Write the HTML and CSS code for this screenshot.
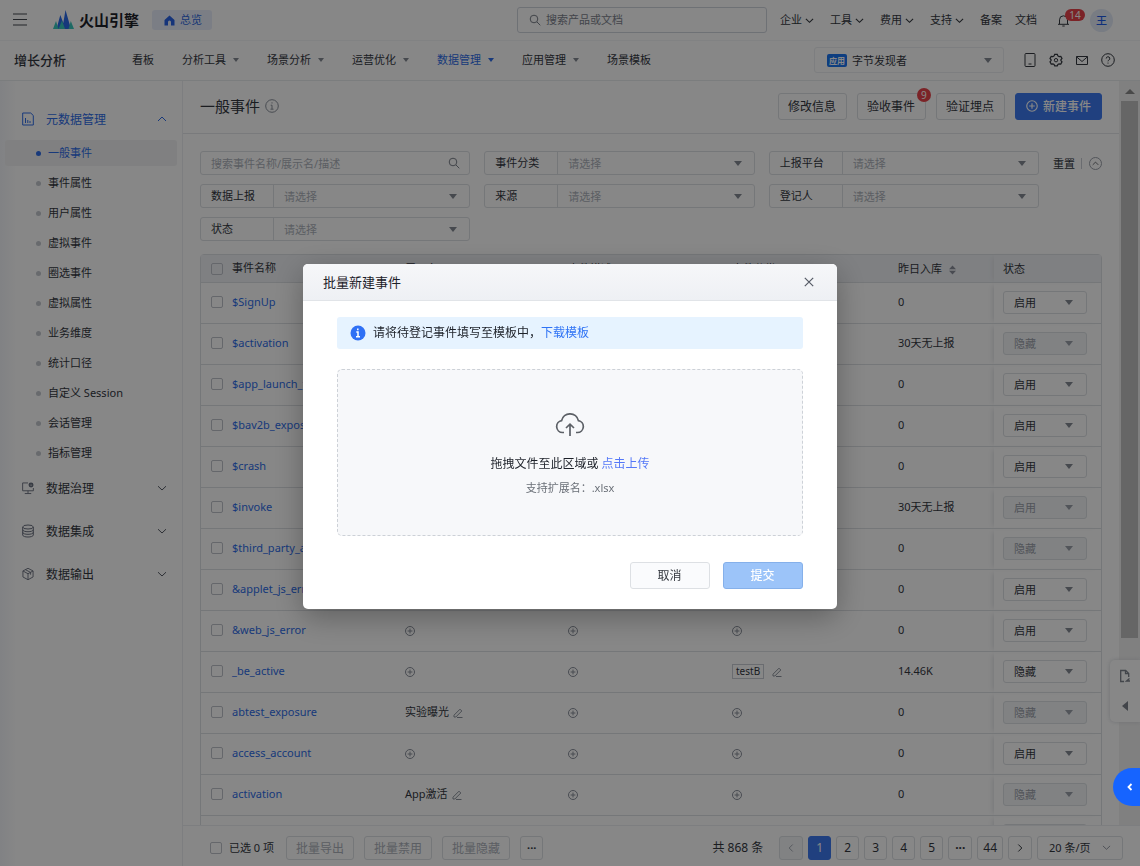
FILE: index.html
```html
<!DOCTYPE html>
<html lang="zh-CN">
<head>
<meta charset="utf-8">
<title>一般事件 - 增长分析</title>
<link rel="stylesheet" href="styles.css">
</head>
<body>
<svg class="sprite" aria-hidden="true">
  <symbol id="plus" viewBox="0 0 12 12"><circle cx="6" cy="6" r="4.5"/><path d="M6 3.6v4.8M3.6 6h4.8"/></symbol>
  <symbol id="pen" viewBox="0 0 12 12"><path d="M2 8.2 8 2.2l1.8 1.8-6 6H2zM5 10.500h5.500"/></symbol>
  <symbol id="down" viewBox="0 0 10 10"><path d="M1 3.200 5 7l4-3.800"/></symbol>
  <symbol id="up" viewBox="0 0 10 10"><path d="M1 7l4-4 4 4"/></symbol>
  <symbol id="search" viewBox="0 0 12 12"><circle cx="5" cy="5" r="3.800"/><path d="M8 8l3.300 3.300"/></symbol>
</svg>
<div class="app">
  <header class="topbar">
    <button class="plain menu-btn" aria-label="菜单"><svg width="14" height="14" viewBox="0 0 14 14"><path d="M0 1h14M0 6.500h14M0 12h14"/></svg></button>
    <svg class="logo" width="21" height="20" viewBox="0 0 21 20"><path fill="#2a6be8" d="M3.500 19 7.300 5l3 8 2.200-13L18 19z"/><path fill="#38c8bd" d="M0 19 3 11l2.500 8zM5.500 19 9 10.500l3 8.500zM15.500 19l2.300-8L21 19z"/></svg>
    <span class="brand">火山引擎</span>
    <a class="overview" href="#"><svg width="11" height="11" viewBox="0 0 11 11"><path d="M5.500.500 10.500 5v5.500H7V7a1.500 1.500 0 0 0-3 0v3.500H.500V5z"/></svg>总览</a>
    <label class="top-search"><svg class="ico" width="12" height="12"><use href="#search"/></svg><input type="text" placeholder="搜索产品或文档" aria-label="搜索产品或文档"></label>
    <nav class="top-nav">
      <a href="#">企业<svg class="ico" width="9" height="9"><use href="#down"/></svg></a>
      <a href="#">工具<svg class="ico" width="9" height="9"><use href="#down"/></svg></a>
      <a href="#">费用<svg class="ico" width="9" height="9"><use href="#down"/></svg></a>
      <a href="#">支持<svg class="ico" width="9" height="9"><use href="#down"/></svg></a>
      <a href="#">备案</a>
      <a href="#" class="close-item">文档</a>
    </nav>
    <button class="plain bell" aria-label="通知"><svg class="ico" width="13" height="13" viewBox="0 0 13 13"><path d="M1 10.300h11M2.500 10V5.800a4 4 0 0 1 8 0V10M5.300 12h2.400"/></svg><span class="count pill">14</span></button>
    <span class="avatar">王</span>
  </header>
  <header class="subbar">
    <strong class="product">增长分析</strong>
    <nav class="sub-nav">
      <a href="#">看板</a>
      <a href="#">分析工具<i class="tri"></i></a>
      <a href="#">场景分析<i class="tri"></i></a>
      <a href="#">运营优化<i class="tri"></i></a>
      <a href="#" class="on">数据管理<i class="tri"></i></a>
      <a href="#">应用管理<i class="tri"></i></a>
      <a href="#">场景模板</a>
    </nav>
    <button class="app-picker"><span class="tag">应用</span>字节发现者<i class="tri"></i></button>
    <div class="tools">
      <button class="plain" aria-label="手机"><svg class="ico" width="14" height="14" viewBox="0 0 14 14"><rect x="2" y=".500" width="10" height="13" rx="1"/><path d="M5.500 11h3"/></svg></button>
      <button class="plain" aria-label="设置"><svg class="ico" width="14" height="14" viewBox="0 0 14 14"><path stroke-width="1.200" d="M5.700 1.300h2.600l.6 1.600 1.200.7 1.700-.3 1.200 2.200-1.100 1.300v.8l1.100 1.300-1.200 2.200-1.700-.3-1.200.7-.6 1.400H5.700l-.6-1.400-1.200-.7-1.700.3L1 8.900l1.100-1.300v-.8L1 5.500l1.200-2.200 1.700.3 1.200-.7z"/><circle cx="7" cy="7.200" r="1.700"/></svg></button>
      <button class="plain" aria-label="消息"><svg class="ico" width="14" height="14" viewBox="0 0 14 14"><path d="M1.500 3.500h11v8h-11zM1.500 3.800 7 8.500l5.500-4.700"/></svg></button>
      <button class="plain" aria-label="帮助"><svg class="ico" width="14" height="14" viewBox="0 0 14 14"><circle cx="7" cy="7" r="6.300"/><path d="M5.200 5.500a1.800 1.800 0 1 1 2.500 1.700c-.5.200-.7.500-.7 1.100M7 9.600v1"/></svg></button>
    </div>
  </header>
  <div class="body">
    <aside class="side">
      <button class="group on"><svg class="ico" width="12" height="14" viewBox="0 0 12 14"><path d="M.700 1h8l2.600 2.500V13H.700zM3.500 11V6M5.800 11V8M8 11V9"/></svg>元数据管理<svg class="ico chev" width="10" height="10"><use href="#up"/></svg></button>
      <ul class="items">
        <li><a class="on" href="#">一般事件</a></li>
        <li><a href="#">事件属性</a></li>
        <li><a href="#">用户属性</a></li>
        <li><a href="#">虚拟事件</a></li>
        <li><a href="#">圈选事件</a></li>
        <li><a href="#">虚拟属性</a></li>
        <li><a href="#">业务维度</a></li>
        <li><a href="#">统计口径</a></li>
        <li><a href="#">自定义 Session</a></li>
        <li><a href="#">会话管理</a></li>
        <li><a href="#">指标管理</a></li>
      </ul>
      <button class="group"><svg class="ico" width="12" height="14" viewBox="0 0 13 14"><path d="M6.500 1.500H.700v8.500h11.600V7M6.500 10v3M3 13h7"/><circle cx="9.800" cy="3.800" r="1.700" stroke-width="2"/></svg>数据治理<svg class="ico chev" width="10" height="10"><use href="#down"/></svg></button>
      <button class="group"><svg class="ico" width="12" height="14" viewBox="0 0 12 14"><ellipse cx="6" cy="3" rx="5.300" ry="2"/><path d="M.700 3v8c0 2.700 10.600 2.700 10.600 0V3M.700 5.700c0 2.700 10.600 2.700 10.600 0M.700 8.300c0 2.700 10.600 2.700 10.600 0"/></svg>数据集成<svg class="ico chev" width="10" height="10"><use href="#down"/></svg></button>
      <button class="group"><svg class="ico" width="12" height="14" viewBox="0 0 13 14"><path d="M6.500.800 12 3.700v6.500l-5.500 3-5.500-3V3.700zM1 3.700l5.500 3 5.500-3M6.500 6.700v6.500M3.700 2.300l5.600 3v2.400"/></svg>数据输出<svg class="ico chev" width="10" height="10"><use href="#down"/></svg></button>
    </aside>
    <main class="main">
      <div class="scroller">
        <div class="view">
          <div class="title-bar">
            <h1>一般事件</h1>
            <svg class="ico info" width="14" height="14" viewBox="0 0 14 14"><circle cx="7" cy="7" r="6.300"/><path d="M7 3.300v1.200M5.700 6.200H7V10M5.500 10.200h3"/></svg>
            <div class="actions">
              <button class="btn">修改信息</button>
              <button class="btn badge-host">验收事件<span class="count round">9</span></button>
              <button class="btn">验证埋点</button>
              <button class="btn primary"><svg class="ico" width="14" height="14" viewBox="0 0 12 12"><use href="#plus"/></svg>新建事件</button>
            </div>
          </div>
          <div class="content">
            <div class="filters">
              <div class="grid">
                <label class="field"><input type="text" placeholder="搜索事件名称/展示名/描述" aria-label="搜索事件"><svg class="ico" width="12" height="12"><use href="#search"/></svg></label>
                <label class="field"><span>事件分类</span><select><option>请选择</option></select><i class="tri"></i></label>
                <label class="field"><span>上报平台</span><select><option>请选择</option></select><i class="tri"></i></label>
                <label class="field"><span>数据上报</span><select><option>请选择</option></select><i class="tri"></i></label>
                <label class="field"><span>来源</span><select><option>请选择</option></select><i class="tri"></i></label>
                <label class="field"><span>登记人</span><select><option>请选择</option></select><i class="tri"></i></label>
                <label class="field"><span>状态</span><select><option>请选择</option></select><i class="tri"></i></label>
              </div>
              <div class="reset">
                <button class="plain">重置</button>
                <button class="plain fold" aria-label="收起"><svg class="ico" width="7" height="7"><use href="#up"/></svg></button>
              </div>
            </div>
            <table class="events">
              <colgroup><col class="c-name"><col class="c-show"><col class="c-desc"><col class="c-tag"><col class="c-num"><col class="c-state"></colgroup>
              <thead>
                <tr><th><input class="check" type="checkbox" aria-label="全选">事件名称</th><th>展示名</th><th>事件描述</th><th>事件分类</th><th>昨日入库<svg class="sort" width="7" height="10" viewBox="0 0 7 10"><path d="M0 4.200 3.500.500 7 4.200zM0 5.800 3.500 9.500 7 5.800z"/></svg></th><th>状态</th></tr>
              </thead>
              <tbody>
                <tr><td><input class="check" type="checkbox" aria-label="选择"><a href="#">$SignUp</a></td><td><svg class="ico" width="12" height="12"><use href="#plus"/></svg></td><td><svg class="ico" width="12" height="12"><use href="#plus"/></svg></td><td><svg class="ico" width="12" height="12"><use href="#plus"/></svg></td><td>0</td><td><label class="state"><select aria-label="状态"><option>启用</option></select><i class="tri"></i></label></td></tr>
                <tr><td><input class="check" type="checkbox" aria-label="选择"><a href="#">$activation</a></td><td><svg class="ico" width="12" height="12"><use href="#plus"/></svg></td><td><svg class="ico" width="12" height="12"><use href="#plus"/></svg></td><td><svg class="ico" width="12" height="12"><use href="#plus"/></svg></td><td>30天无上报</td><td><label class="state off"><select disabled aria-label="状态"><option>隐藏</option></select><i class="tri"></i></label></td></tr>
                <tr><td><input class="check" type="checkbox" aria-label="选择"><a href="#">$app_launch_time</a></td><td><svg class="ico" width="12" height="12"><use href="#plus"/></svg></td><td><svg class="ico" width="12" height="12"><use href="#plus"/></svg></td><td><svg class="ico" width="12" height="12"><use href="#plus"/></svg></td><td>0</td><td><label class="state"><select aria-label="状态"><option>启用</option></select><i class="tri"></i></label></td></tr>
                <tr><td><input class="check" type="checkbox" aria-label="选择"><a href="#">$bav2b_exposure</a></td><td><svg class="ico" width="12" height="12"><use href="#plus"/></svg></td><td><svg class="ico" width="12" height="12"><use href="#plus"/></svg></td><td><svg class="ico" width="12" height="12"><use href="#plus"/></svg></td><td>0</td><td><label class="state"><select aria-label="状态"><option>启用</option></select><i class="tri"></i></label></td></tr>
                <tr><td><input class="check" type="checkbox" aria-label="选择"><a href="#">$crash</a></td><td><svg class="ico" width="12" height="12"><use href="#plus"/></svg></td><td><svg class="ico" width="12" height="12"><use href="#plus"/></svg></td><td><svg class="ico" width="12" height="12"><use href="#plus"/></svg></td><td>0</td><td><label class="state"><select aria-label="状态"><option>启用</option></select><i class="tri"></i></label></td></tr>
                <tr><td><input class="check" type="checkbox" aria-label="选择"><a href="#">$invoke</a></td><td><svg class="ico" width="12" height="12"><use href="#plus"/></svg></td><td><svg class="ico" width="12" height="12"><use href="#plus"/></svg></td><td><svg class="ico" width="12" height="12"><use href="#plus"/></svg></td><td>30天无上报</td><td><label class="state off"><select disabled aria-label="状态"><option>启用</option></select><i class="tri"></i></label></td></tr>
                <tr><td><input class="check" type="checkbox" aria-label="选择"><a href="#">$third_party_auth</a></td><td><svg class="ico" width="12" height="12"><use href="#plus"/></svg></td><td><svg class="ico" width="12" height="12"><use href="#plus"/></svg></td><td><svg class="ico" width="12" height="12"><use href="#plus"/></svg></td><td>0</td><td><label class="state off"><select disabled aria-label="状态"><option>隐藏</option></select><i class="tri"></i></label></td></tr>
                <tr><td><input class="check" type="checkbox" aria-label="选择"><a href="#">&amp;applet_js_error</a></td><td><svg class="ico" width="12" height="12"><use href="#plus"/></svg></td><td><svg class="ico" width="12" height="12"><use href="#plus"/></svg></td><td><svg class="ico" width="12" height="12"><use href="#plus"/></svg></td><td>0</td><td><label class="state"><select aria-label="状态"><option>启用</option></select><i class="tri"></i></label></td></tr>
                <tr><td><input class="check" type="checkbox" aria-label="选择"><a href="#">&amp;web_js_error</a></td><td><svg class="ico" width="12" height="12"><use href="#plus"/></svg></td><td><svg class="ico" width="12" height="12"><use href="#plus"/></svg></td><td><svg class="ico" width="12" height="12"><use href="#plus"/></svg></td><td>0</td><td><label class="state"><select aria-label="状态"><option>启用</option></select><i class="tri"></i></label></td></tr>
                <tr><td><input class="check" type="checkbox" aria-label="选择"><a href="#">_be_active</a></td><td><svg class="ico" width="12" height="12"><use href="#plus"/></svg></td><td><svg class="ico" width="12" height="12"><use href="#plus"/></svg></td><td><span class="label">testB</span><svg class="ico pen" width="12" height="12"><use href="#pen"/></svg></td><td>14.46K</td><td><label class="state"><select aria-label="状态"><option>隐藏</option></select><i class="tri"></i></label></td></tr>
                <tr><td><input class="check" type="checkbox" aria-label="选择"><a href="#">abtest_exposure</a></td><td>实验曝光<svg class="ico pen" width="12" height="12"><use href="#pen"/></svg></td><td><svg class="ico" width="12" height="12"><use href="#plus"/></svg></td><td><svg class="ico" width="12" height="12"><use href="#plus"/></svg></td><td>0</td><td><label class="state off"><select disabled aria-label="状态"><option>隐藏</option></select><i class="tri"></i></label></td></tr>
                <tr><td><input class="check" type="checkbox" aria-label="选择"><a href="#">access_account</a></td><td><svg class="ico" width="12" height="12"><use href="#plus"/></svg></td><td><svg class="ico" width="12" height="12"><use href="#plus"/></svg></td><td><svg class="ico" width="12" height="12"><use href="#plus"/></svg></td><td>0</td><td><label class="state"><select aria-label="状态"><option>启用</option></select><i class="tri"></i></label></td></tr>
                <tr><td><input class="check" type="checkbox" aria-label="选择"><a href="#">activation</a></td><td>App激活<svg class="ico pen" width="12" height="12"><use href="#pen"/></svg></td><td><svg class="ico" width="12" height="12"><use href="#plus"/></svg></td><td><svg class="ico" width="12" height="12"><use href="#plus"/></svg></td><td>0</td><td><label class="state off"><select disabled aria-label="状态"><option>隐藏</option></select><i class="tri"></i></label></td></tr>
                <tr><td></td><td></td><td></td><td></td><td></td><td><label class="state"><select aria-label="状态"><option></option></select></label></td></tr>
              </tbody>
            </table>
          </div>
        </div>
        <div class="track"><i class="arrow"></i><div class="thumb"></div></div>
      </div>
      <footer class="foot">
        <label class="picked"><input type="checkbox">已选 0 项</label>
        <button class="btn" disabled>批量导出</button>
        <button class="btn" disabled>批量禁用</button>
        <button class="btn" disabled>批量隐藏</button>
        <button class="btn more">···</button>
        <div class="pager">
          <span class="total">共 868 条</span>
          <button class="pg wide" disabled aria-label="上一页"><svg class="ico" width="10" height="10" viewBox="0 0 10 10"><path d="M6.700 1.500 3.200 5l3.500 3.500"/></svg></button>
          <button class="pg on">1</button>
          <button class="pg">2</button>
          <button class="pg">3</button>
          <button class="pg">4</button>
          <button class="pg">5</button>
          <button class="pg wide"><b>···</b></button>
          <button class="pg">44</button>
          <button class="pg wide" aria-label="下一页"><svg class="ico" width="10" height="10" viewBox="0 0 10 10"><path d="M3.300 1.500 6.800 5 3.300 8.500"/></svg></button>
          <label class="size"><select aria-label="每页条数"><option>20 条/页</option></select><svg class="ico" width="9" height="9"><use href="#down"/></svg></label>
        </div>
      </footer>
    </main>
  </div>
</div>
<div class="dock">
  <svg class="ico" width="12" height="14" viewBox="0 0 12 14"><path stroke-width="1.300" d="M5 12.500H1.700V1.500h5l3 3V8M6.500 1.500v3.200h3M10.500 9.500 7.500 12h3.500"/></svg>
  <i class="left"></i>
</div>
<div class="mask">
  <section class="modal" role="dialog" aria-labelledby="dlg-title">
    <header class="modal-head">
      <h2 id="dlg-title">批量新建事件</h2>
      <button class="plain" aria-label="关闭"><svg width="10" height="10" viewBox="0 0 10 10"><path d="M.800.800l8.400 8.400M9.200.800.800 9.200"/></svg></button>
    </header>
    <div class="modal-body">
      <p class="tip"><svg width="16" height="16" viewBox="0 0 16 16"><circle cx="8" cy="8" r="7.500" fill="#2f70f5"/><path fill="none" stroke="#fff" stroke-width="1.500" d="M7.800 3.500v1.700M6.300 6.900h1.700v4.600M6 11.700h4"/></svg><span>请将待登记事件填写至模板中，</span><a href="#">下载模板</a></p>
      <div class="drop">
        <svg class="cloud" width="30" height="24" viewBox="0 0 30 24"><path d="M9 19.500H7.500a6 6 0 0 1-.9-11.900 8.600 8.600 0 0 1 16.800 0 6 6 0 0 1-.9 11.900H21M15 23V11.500M11 15l4-3.800 4 3.800"/></svg>
        <p>拖拽文件至此区域或 <a href="#">点击上传</a></p>
        <p class="hint">支持扩展名：.xlsx</p>
      </div>
      <div class="modal-foot"><button class="btn">取消</button><button class="btn submit" disabled>提交</button></div>
    </div>
  </section>
</div>
<button class="fab" aria-label="展开"><svg width="8" height="8" viewBox="0 0 8 8"><path d="M5.500 1 2.500 4l3 3"/></svg></button>
</body>
</html>
```
FILE: styles.css
```css
* { box-sizing: border-box; }
body, h1, h2, p, ul { margin: 0; padding: 0; }
body, button, input, select {
  font-family: "Noto Sans", "Noto Sans CJK SC", sans-serif;
  font-size: 11px;
  color: #34383f;
}
body { height: 100vh; overflow: hidden; background: #fff; line-height: 16px; }
a { color: inherit; text-decoration: none; }
button { cursor: pointer; }
svg { flex: none; }
.sprite { display: none; }
.ico { fill: none; stroke: currentColor; }
.plain { border: 0; background: none; padding: 0; display: flex; align-items: center; }
.tri { width: 0; height: 0; border: 4px solid transparent; border-top: 5px solid #858a94; border-bottom: 0; flex: none; }
input[type="text"], select { border: 0; outline: 0; background: none; appearance: none; min-width: 0; padding: 0; opacity: 1; }
::placeholder { color: #adb2bb; opacity: 1; }
input[type="checkbox"] { appearance: none; width: 12px; height: 12px; margin: 0; border: 1px solid #bfc3cb; border-radius: 2px; flex: none; }
.app { display: flex; flex-direction: column; height: 100vh; }

.topbar { display: flex; align-items: center; height: 41px; padding: 0 27px 0 13px; border-bottom: 1px solid #f4f5f7; flex: none; }
.menu-btn svg { stroke: #42464e; stroke-width: 1.200; fill: none; }
.logo { margin-left: 26px; }
.brand { font-size: 15px; font-weight: 700; margin-left: 5px; color: #1d2129; }
.overview { display: flex; align-items: center; gap: 5px; height: 20px; padding: 0 10px 0 12px; margin-left: 13px; border-radius: 3px; background: #e9effc; color: #2e68dc; }
.overview svg { fill: #2962e6; }
.top-search { display: flex; align-items: center; gap: 5px; width: 250px; height: 26px; margin-left: auto; padding: 0 11px 1px; border: 1px solid #d0d5de; border-radius: 3px; color: #7a7f89; }
.top-search input { flex: 1; }
.top-search ::placeholder { color: #7d838e; }
.top-nav { display: flex; gap: 16px; margin-left: 13px; }
.top-nav a { display: flex; align-items: center; gap: 3px; }
.top-nav .ico { stroke-width: 1.300; }
.top-nav .close-item { margin-left: -3px; }
.bell { position: relative; margin-left: 20px; margin-right: 20px; }
.count { position: absolute; background: #e8434a; color: #fff; font-size: 10px; line-height: 12px; border-radius: 8px; text-align: center; }
.pill { left: 8px; top: -5px; width: 20px; }
.round { right: -6px; top: -6px; width: 14px; line-height: 14px; }
.avatar { width: 23px; height: 23px; border-radius: 50%; background: #e3eaf8; color: #1d5be8; font-weight: 500; line-height: 23px; text-align: center; }

.subbar { display: flex; align-items: center; height: 40px; padding: 0 25px 1px 14px; border-bottom: 1px solid #e9ecef; flex: none; }
.product { font-size: 13px; font-weight: 500; width: 118px; }
.sub-nav { display: flex; gap: 28px; flex: 1; }
.sub-nav a { display: flex; align-items: center; gap: 7px; }
.sub-nav .tri { border-width: 4px 3px 0; }
.sub-nav .on { color: #2e6de8; }
.sub-nav .on .tri { border-top-color: #2e6de8; }
.app-picker { display: flex; align-items: center; width: 190px; height: 26px; padding: 0 11px 0 12px; border: 1px solid #eceef1; border-radius: 3px; background: none; }
.app-picker .tri { margin-left: auto; }
.tag { font-size: 8px; font-weight: 700; line-height: 13px; padding: 0 2px; margin-right: 5px; color: #fff; background: #1b76f2; border-radius: 2px; width: 20px; white-space: nowrap; }
.tools { display: flex; gap: 12px; margin-left: 19px; color: #6a6f7a; }

.body { display: flex; flex: 1; min-height: 0; }
.side { width: 183px; flex: none; padding-top: 17px; border-right: 1px solid #eceef1; background: linear-gradient(to right, #f3f5fa, #fff 16px); }
.group { display: flex; align-items: center; width: 100%; height: 43px; padding: 0 15px 0 22px; border: 0; background: none; font-size: 12px; gap: 12px; }
.group .ico { color: #6b7180; }
.group .chev { margin-left: auto; color: #565b66; }
.group.on, .group.on .ico { color: #2e6de8; }
.group.on { height: 42px; }
.items { list-style: none; display: grid; gap: 4px; padding: 0 5px; }
.items a { display: flex; align-items: center; height: 26px; padding-left: 31px; border-radius: 3px; gap: 7px; }
.items a::before { content: ""; width: 5px; height: 5px; border-radius: 50%; background: #c4c8cf; }
.items .on { background: #f1f2f3; color: #2e6de8; }
.items .on::before { background: #2e6de8; }

.main { flex: 1; min-width: 0; display: flex; flex-direction: column; }
.scroller { flex: 1; min-height: 0; display: flex; overflow: hidden; }
.view { flex: 1; min-width: 0; }
.title-bar { display: flex; align-items: center; height: 53px; padding: 0 17px 2px; border-bottom: 1px solid #e5e7eb; }
h1 { font-size: 15px; font-weight: 400; }
.info { margin-left: 5px; color: #8a909b; }
.actions { display: flex; gap: 10px; margin-left: auto; }
.btn { display: flex; align-items: center; justify-content: center; font-size: 12px; height: 27px; padding: 0 10px 1px 9px; border: 1px solid #dde0e4; border-radius: 3px; background: none; }
.badge-host { position: relative; }
.primary { gap: 4px; background: #3d7af0; border-color: #3d7af0; color: #fff; font-weight: 500; }
.content { padding: 17px 17px 0; }
.filters { display: flex; justify-content: space-between; margin-bottom: 13px; }
.grid { display: grid; flex: 1; grid-template-columns: repeat(3, 1fr); gap: 9px 14px; }
.field { display: flex; align-items: center; height: 24px; padding: 0 9px 0 10px; border: 1px solid #dde0e4; border-radius: 3px; color: #7d828c; }
.field span { width: 63px; line-height: 22px; border-right: 1px solid #dde0e4; margin-right: 10px; color: #34383f; }
.field select { flex: 1; color: #adb2bb; }
.field input { flex: 1; }
.field .tri { margin-right: 3px; }
.reset { display: flex; align-items: center; width: 63px; height: 24px; justify-content: flex-end; gap: 6px; }
.reset .fold { position: relative; width: 13px; height: 13px; border: 1px solid #9ba0aa; border-radius: 50%; justify-content: center; margin-left: 8px; }
.fold::before { content: ""; position: absolute; left: -9px; height: 11px; border-left: 1px solid #c9cdd4; }

.events { width: 100%; table-layout: fixed; border-collapse: separate; border-spacing: 0; border: 1px solid #dde0e4; border-radius: 4px; }
.c-name { width: 192px; }
.c-show { width: 163px; }
.c-desc { width: 164px; }
.c-tag { width: 166px; }
.c-num { width: 108px; }
.c-state { width: 107px; }
th, td { text-align: left; font-weight: 400; padding: 0 12px; border-bottom: 1px solid #dde0e4; white-space: nowrap; }
th { height: 28px; background: #f0f2f6; }
td { height: 41px; padding-bottom: 2px; }
th:first-child, td:first-child { padding-left: 10px; }
th:last-child, td:last-child { padding-left: 9px; box-shadow: -4px 0 5px -3px #dfe1e5; }
td .ico, th svg { vertical-align: middle; }
.events .check { margin: 0 9px 2px 0; vertical-align: middle; }
td .ico { color: #8a909b; margin-left: -1px; }
td .ico.pen { margin-left: 3px; }
td a { color: #2e6de8; }
.sort { fill: #8a8f9a; margin-left: 7px; }
.label { display: inline-block; line-height: 13px; padding: 0 3px; border: 1px solid #c9cdd4; font-size: 10px; margin-right: 4px; }
.state { display: flex; align-items: center; width: 84px; height: 23px; padding: 0 13px 0 10px; border: 1px solid #dde0e4; border-radius: 3px; }
.state select { flex: 1; }
.state.off { background: #f3f5f8; }
.off select { color: #9a9fa9; opacity: 1; }
.off .tri { border-top-color: #9ba0aa; }

.track { width: 21px; flex: none; padding: 8px 2px 0; background: #f1f1f1; }
.arrow { display: block; width: 0; margin: 0 auto 7px; border: 5px solid transparent; border-top: 0; border-bottom-color: #8a8a8a; }
.thumb { height: 73%; background: #c1c1c1; }

.foot { display: flex; align-items: center; height: 41px; padding: 3px 17px 0 27px; border-top: 1px solid #eceef1; gap: 10px; flex: none; }
.foot .btn { height: 24px; padding: 0 9px; }
.foot .btn:disabled { color: #adb2bb; }
.foot .more { padding: 0 6px; font-size: 11px; font-weight: 700; }
.picked { display: flex; align-items: center; gap: 7px; margin-right: 2px; }
.pager { display: flex; gap: 5px; margin-left: auto; align-items: center; }
.total { font-size: 12px; margin-right: 11px; }
.pg { min-width: 23px; height: 24px; padding: 0 5px; border: 1px solid #dde0e4; border-radius: 3px; background: none; font-size: 12px; display: flex; align-items: center; justify-content: center; }
.pg.wide { min-width: 24px; }
.pg:disabled { background: #f3f5f8; color: #a4a9b3; }
.pg.on { background: #3d7af0; border-color: #3d7af0; color: #fff; }
.size { display: flex; align-items: center; width: 86px; height: 24px; padding: 0 11px; border: 1px solid #dde0e4; border-radius: 3px; color: #8a909b; }
.size select { flex: 1; }

.dock { position: fixed; right: 0; top: 660px; width: 30px; padding: 9px 0 11px; display: flex; flex-direction: column; align-items: center; gap: 18px; background: #fff; border-radius: 5px 0 0 5px; box-shadow: 0 0 4px #d3d6db; color: #7d828c; }
.left { width: 0; border: 5px solid transparent; border-left: 0; border-right: 6px solid #7d828c; }
.mask { position: fixed; inset: 0; display: flex; align-items: center; justify-content: center; padding-top: 7px; background: rgba(0, 0, 0, 0.470); }
.modal { width: 534px; background: #fff; border-radius: 5px; box-shadow: 0 8px 30px rgba(0, 0, 0, 0.300); overflow: hidden; }
.modal-head { display: flex; align-items: center; justify-content: space-between; height: 37px; padding: 0 23px 0 20px; border-bottom: 1px solid #e1e4e8; background: linear-gradient(#f6f7f9, #eef0f4); }
.modal-head svg { stroke: #565b66; fill: none; stroke-width: 1.200; }
h2 { font-size: 13px; font-weight: 400; color: #1d2129; }
.modal-body { padding: 16px 34px 20px; }
.modal-body p { font-size: 12px; color: #1d2129; }
.modal-body a { color: #2f73f5; }
.tip { display: flex; align-items: center; height: 32px; padding: 0 13px; background: #e6f3ff; border-radius: 3px; }
.tip span { margin-left: 7px; }
.drop { display: flex; flex-direction: column; align-items: center; height: 167px; margin-top: 20px; padding-top: 43px; background: #f7f8fa; border: 1px dashed #cdd1d7; border-radius: 5px; }
.modal-body .drop a { color: #5578f8; }
.cloud { fill: none; stroke: #5c6066; stroke-width: 1.700; margin-bottom: 19px; }
.modal-body .hint { margin-top: 8px; font-size: 11px; color: #6b7078; }
.modal-foot { display: flex; justify-content: flex-end; gap: 13px; margin-top: 26px; }
.modal-foot .btn { width: 80px; height: 27px; background: #fafbfd; }
.modal-foot .submit { background: #9cc4f9; border-color: #85b0ea; color: #fff; font-weight: 500; }
.fab { position: fixed; right: 0; top: 768px; width: 27px; height: 38px; padding: 0 0 0 6px; border: 0; border-radius: 19px 0 0 19px; background: #1664ff; display: flex; align-items: center; justify-content: center; }
.fab svg { fill: none; stroke: #fff; stroke-width: 1.800; }
```
